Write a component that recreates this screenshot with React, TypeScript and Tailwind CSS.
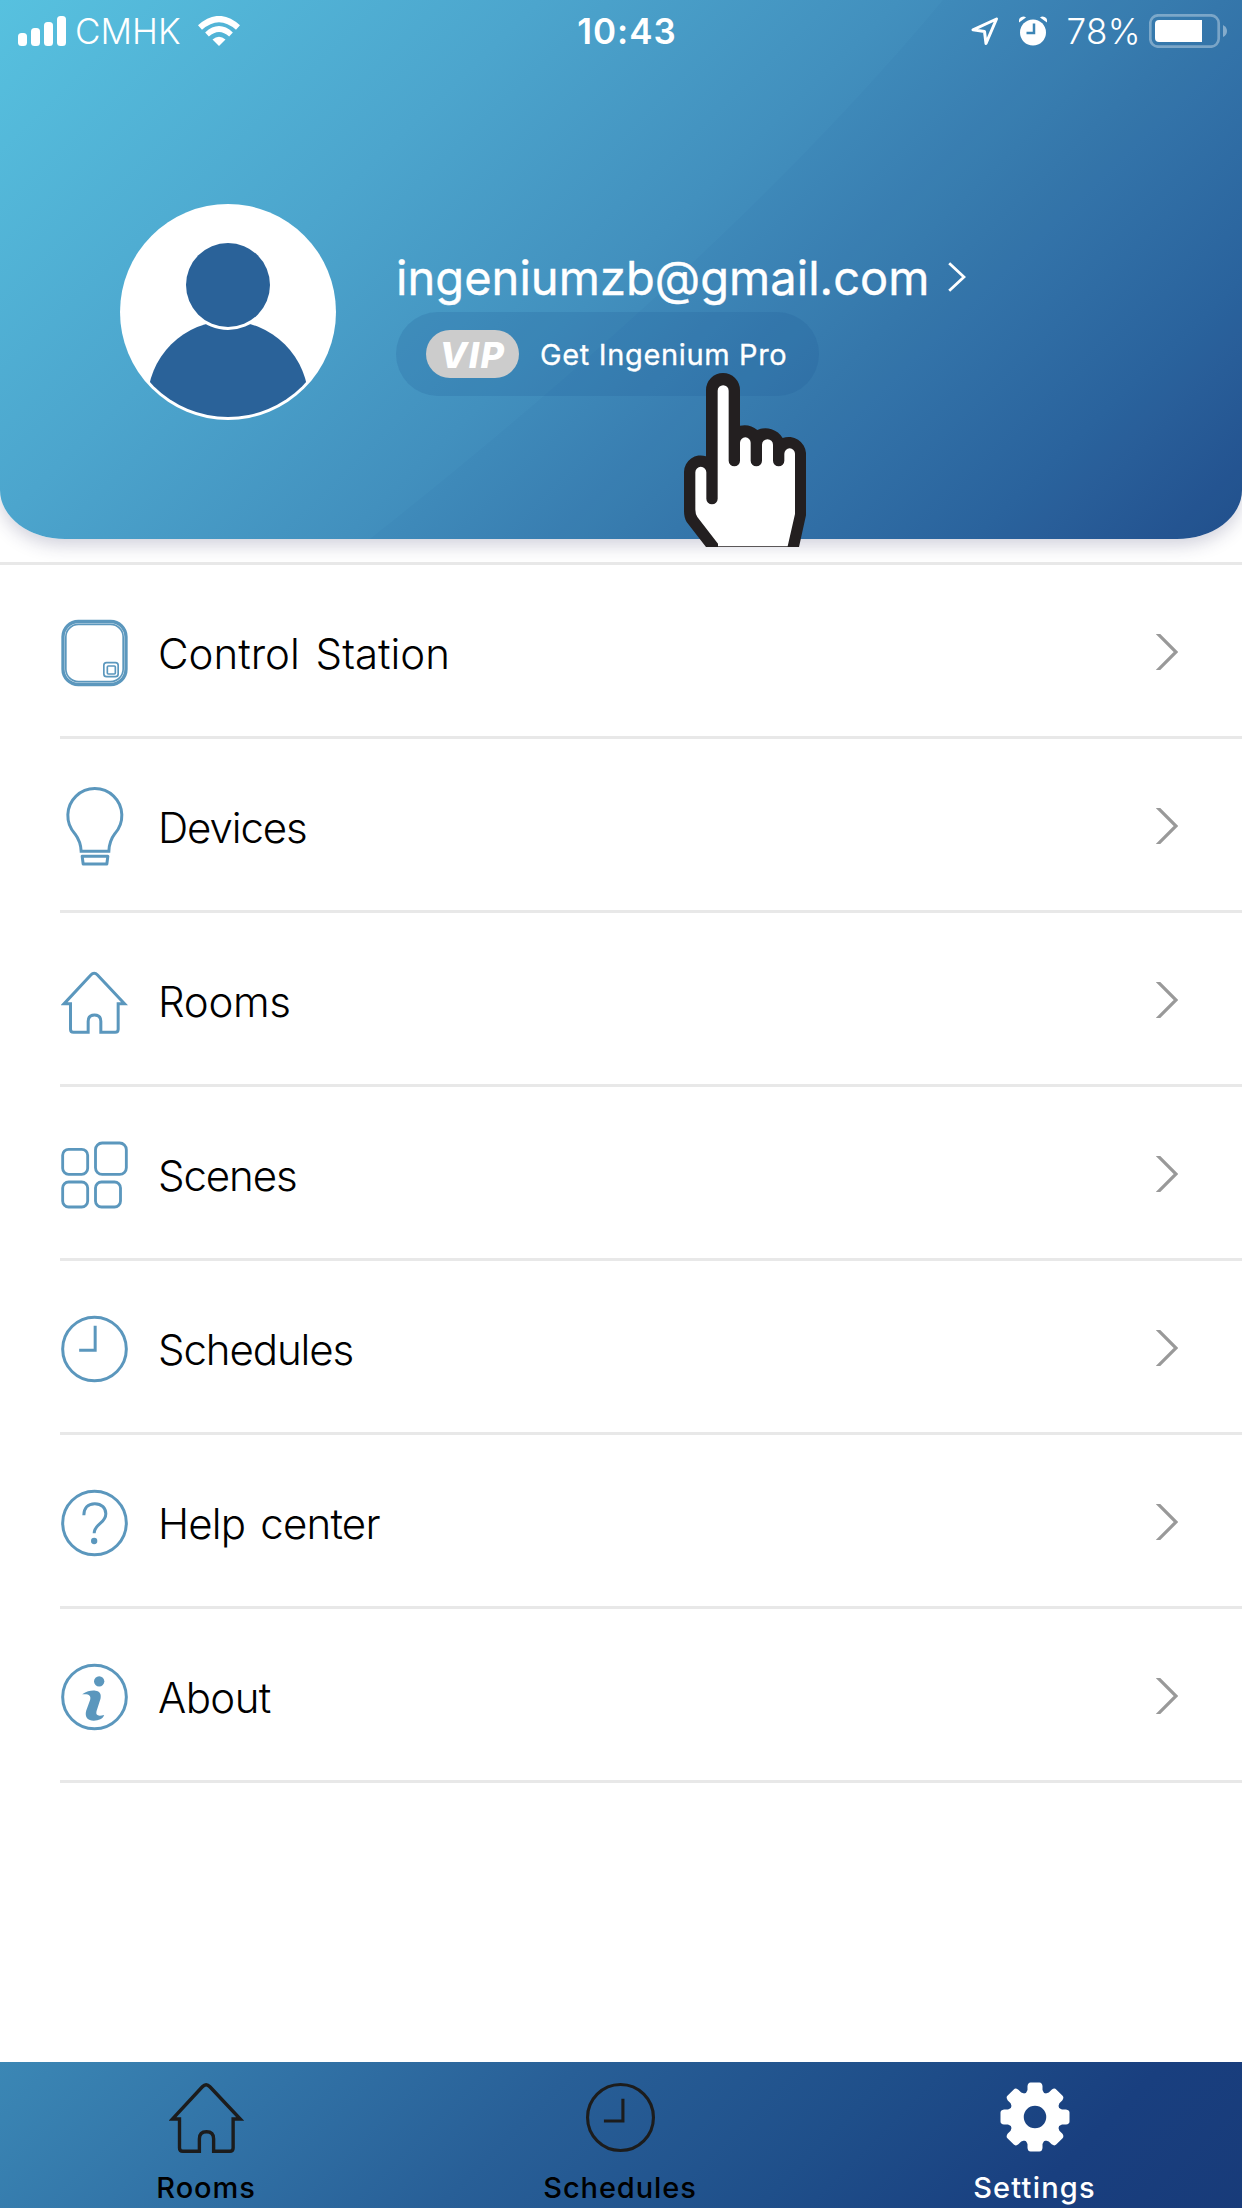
import type { ReactNode } from "react";

type IconProps = {
  className?: string;
};

type MenuItem = {
  label: string;
  icon: ReactNode;
  spacing: string;
};

function ControlStationIcon() {
  return (
    <svg viewBox="0 0 200 240" className="w-[67px] h-20" fill="none" stroke="#5b97bd">
      <rect x="5.500" y="25.500" width="189" height="189" rx="46" strokeWidth="10" />
      <rect x="14" y="34" width="172" height="172" rx="38" strokeWidth="5" />
      <rect x="128" y="149" width="43" height="42" rx="8" strokeWidth="5" />
      <rect x="138.500" y="159" width="24" height="24" rx="3" strokeWidth="5" />
    </svg>
  );
}

function BulbIcon() {
  return (
    <svg viewBox="0 0 200 240" className="w-[67px] h-20" fill="none" stroke="#5b97bd" strokeWidth="9">
      <path d="M60 193 C59 165 50 152 41 140 A81 81 0 1 1 161 140 C152 152 144 165 143 193 Z" />
      <path d="M63 208 H140 L137 231 H66 Z" strokeLinejoin="round" />
    </svg>
  );
}

function HouseIcon({ className }: IconProps) {
  return (
    <svg viewBox="0 0 200 240" className={className} fill="none" stroke="currentColor" strokeWidth="9">
      <path d="M81 214 H37 Q28 214 28 205 V128 H9 L89 42 Q99 31 109 42 L190 128 H171 V205 Q171 214 162 214 H119 V181 Q119 162 100 162 Q81 162 81 181 Z" />
    </svg>
  );
}

function ScenesIcon() {
  return (
    <svg viewBox="0 0 200 240" className="w-[67px] h-20" fill="none" stroke="#5b97bd" strokeWidth="8.500">
      <rect x="4.500" y="43" width="75" height="75" rx="18" />
      <rect x="103" y="24" width="92.500" height="94" rx="20" />
      <rect x="4.500" y="141" width="75" height="75" rx="18" />
      <rect x="103" y="141" width="75" height="75" rx="18" />
    </svg>
  );
}

function ClockIcon({ className, hands }: IconProps & { hands: string }) {
  return (
    <svg viewBox="0 0 200 240" className={className} fill="none" stroke="currentColor" strokeWidth="9">
      <circle cx="100" cy="120" r="95.500" />
      <path d={hands} />
    </svg>
  );
}

function HelpIcon() {
  return (
    <svg viewBox="0 0 200 240" className="w-[67px] h-20" fill="none" stroke="#5b97bd" strokeWidth="9">
      <circle cx="100" cy="120" r="95.500" />
      <path d="M68 97 C68 75 80 62 101 62 C122 62 134 76 134 92 C134 122 99 122 99 151" />
      <circle cx="99" cy="174" r="9.500" fill="#5b97bd" stroke="none" />
    </svg>
  );
}

function AboutIcon() {
  return (
    <svg viewBox="0 0 200 240" className="w-[67px] h-20" fill="#5b97bd">
      <circle cx="100" cy="120" r="95.500" fill="none" stroke="#5b97bd" strokeWidth="9" />
      <circle cx="114" cy="73" r="15.500" />
      <path d="M63 112 C78 101 92 100 103 101 C116 102 121 111 118 125 L106 163 C103 175 110 179 129 174 C126 185 112 191 98 191 C80 191 70 180 75 161 L87 128 C90 116 84 110 63 112 Z" />
    </svg>
  );
}

function GearIcon() {
  const angles = [0, 45, 90, 135, 180, 225, 270, 315];

  return (
    <svg viewBox="-35 -35 70 70" className="w-[70px] h-[70px]" fill="white">
      <circle r="18.500" fill="none" stroke="white" strokeWidth="14.500" />
      {angles.map((angle) => (
        <path
          key={angle}
          d="M-10 -22 L-7.500 -27 V-31 Q-7 -34.500 -4.500 -34.500 H4.500 Q7 -34.500 7.500 -31 V-27 L10 -22 Z"
          transform={`rotate(${angle})`}
        />
      ))}
    </svg>
  );
}

function Avatar() {
  return (
    <svg viewBox="60 72 648 648" className="w-[216px] h-[216px] shrink-0">
      <defs>
        <clipPath id="avatar-clip">
          <circle cx="384" cy="396" r="315" />
        </clipPath>
      </defs>
      <circle cx="384" cy="396" r="324" fill="white" />
      <circle cx="384" cy="664.500" r="241.700" fill="#2a6299" clipPath="url(#avatar-clip)" />
      <circle cx="384" cy="315" r="135" fill="white" />
      <circle cx="384" cy="315" r="126" fill="#2a6299" />
    </svg>
  );
}

function Pointer() {
  return (
    <svg viewBox="132 98 366 522" className="absolute left-[684px] top-[373px] w-[122px] h-[174px]">
      <path
        fill="#231f20"
        d="M198 620 L140 545 Q132 532 132 512 V394 A50 50 0 0 1 198 348 V149 A51 51 0 0 1 300 149 V256 A60 60 0 0 1 352 269 A60 60 0 0 1 428 293 A52 52 0 0 1 498 338 V525 L477 620 Z"
      />
      <path
        fill="white"
        d="M234 618 V610 L172 530 Q166 520 166 508 V396 A16.500 16.500 0 0 1 199 396 V475 A17 17 0 0 0 233 475 V151 A16.500 16.500 0 0 1 266 151 V361 A17 17 0 0 0 300 361 V307 A16 16 0 0 1 332 307 V361 A17 17 0 0 0 366 361 V313 A16.500 16.500 0 0 1 399 313 V361 A17 17 0 0 0 433 361 V340 A16 16 0 0 1 465 340 V521 L443 618 Z"
      />
    </svg>
  );
}

function StatusBar() {
  return (
    <div className="relative grid grid-cols-3 items-center h-[62px] text-white">
      <div className="flex items-center pl-[18px]">
        <svg viewBox="0 0 48 30" className="w-12 h-[30px]" fill="white">
          <rect x="0" y="17" width="9" height="13" rx="3.500" />
          <rect x="13" y="12" width="9" height="18" rx="3.500" />
          <rect x="26" y="6" width="9" height="24" rx="3.500" />
          <rect x="39" y="0" width="9" height="30" rx="3.500" />
        </svg>
        <span className="ml-[9px] w-[123px] text-[35px] leading-[62px] font-light">CMHK</span>
        <svg viewBox="0 0 42 30" className="w-[42px] h-[30px]" fill="none" stroke="white">
          <path d="M2 11.500 Q21 -5.500 40 11.500" strokeWidth="6" />
          <path d="M9 18.500 Q21 7.500 33 18.500" strokeWidth="5.500" />
          <path d="M14.500 23.500 Q21 18 27.500 23.500 L21 30 Z" fill="white" stroke="none" />
        </svg>
      </div>

      <div className="pl-3 text-center text-[35px] font-semibold tracking-[1px]">10:43</div>

      <div className="flex items-center justify-end pr-[15px]">
        <svg viewBox="0 0 29 30" className="w-[29px] h-[30px]" fill="none" stroke="white" strokeWidth="3">
          <path d="M26.500 3 L3 13.800 L14.500 15.500 L16 27.500 Z" strokeLinejoin="round" />
        </svg>
        <svg viewBox="0 0 28 30" className="ml-5 w-7 h-[30px]" fill="white">
          <circle cx="14" cy="16.500" r="13" />
          <path d="M0 6.500 Q-1 2.500 2.500 1 Q5 0 7 1.500 Z" />
          <path d="M28 6.500 Q29 2.500 25.500 1 Q23 0 21 1.500 Z" />
          <path d="M15 7.500 V17 H7.500" fill="none" stroke="#3c85b5" strokeWidth="2.500" />
        </svg>
        <span className="ml-[20px] text-[35px] leading-[62px] font-light tracking-[0.4px]">78%</span>
        <svg viewBox="0 0 78 34" className="ml-[8px] w-[78px] h-[34px]">
          <rect x="1.300" y="1.300" width="68.400" height="31.400" rx="8" fill="none" stroke="white" strokeOpacity="0.35" strokeWidth="2.700" />
          <path d="M53 6 H10 Q6 6 6 10 V24 Q6 28 10 28 H53 Z" fill="white" />
          <path d="M74 11 Q78 13 78 17 Q78 21 74 23 Z" fill="white" fillOpacity="0.4" />
        </svg>
      </div>
    </div>
  );
}

function Header() {
  return (
    <header className="relative h-[539px] overflow-hidden rounded-b-[65px_49px] bg-[linear-gradient(136deg,#57c1df_0%,#4ca5cd_30%,#4290be_50%,#3779ad_68%,#2c659e_85%,#22508d_100%)]">
      <svg viewBox="0 0 1242 539" className="absolute inset-0 w-full h-full">
        <path d="M943 0 Q735 250 370 539 H1242 V0 Z" fill="#0a2f78" fillOpacity="0.025" />
      </svg>
      <StatusBar />
      <div className="relative flex items-start pl-[120px] pt-[142px]">
        <Avatar />
        <div className="flex flex-col items-start ml-[60px] pt-[41px]">
          <div className="flex items-center h-[65px] mb-[2px] text-white">
            <span className="text-[47px] leading-[65px] tracking-[0.05px] [-webkit-text-stroke:0.4px_white]">ingeniumzb@gmail.com</span>
            <svg viewBox="0 0 18 30" className="ml-[18px] mb-[2px] w-[18px] h-[30px]" fill="none" stroke="white" strokeWidth="2.800">
              <path d="M1.200 1.200 L16 15 L1.200 28.800" />
            </svg>
          </div>
          <button className="flex items-center w-[423px] h-[84px] pl-[30px] rounded-[42px] bg-[#1d5a94]/20 text-white">
            <span className="flex items-center justify-center w-[93px] h-12 pt-px rounded-[24px] bg-[#cccccc] text-[36px] leading-none font-extrabold italic tracking-[1.5px]">
              VIP
            </span>
            <span className="ml-[21px] pt-px text-[29px] tracking-[0.65px] whitespace-nowrap [-webkit-text-stroke:0.3px_white]">
              Get Ingenium Pro
            </span>
          </button>
        </div>
      </div>
    </header>
  );
}

const menuItems: MenuItem[] = [
  {
    label: "Control Station",
    icon: <ControlStationIcon />,
    spacing: "[word-spacing:4px]",
  },
  {
    label: "Devices",
    icon: <BulbIcon />,
    spacing: "tracking-[-1.1px]",
  },
  {
    label: "Rooms",
    icon: <HouseIcon className="w-[67px] h-20 text-[#5b97bd]" />,
    spacing: "tracking-[-0.3px]",
  },
  {
    label: "Scenes",
    icon: <ScenesIcon />,
    spacing: "tracking-[-1.1px]",
  },
  {
    label: "Schedules",
    icon: <ClockIcon className="w-[67px] h-20 text-[#5b97bd]" hands="M102 50 V124 H54" />,
    spacing: "tracking-[-1.1px]",
  },
  {
    label: "Help center",
    icon: <HelpIcon />,
    spacing: "tracking-[-0.8px] [word-spacing:4px]",
  },
  {
    label: "About",
    icon: <AboutIcon />,
    spacing: "tracking-[-0.6px]",
  },
];

function MenuRow({ label, icon, spacing }: MenuItem) {
  return (
    <li className="flex items-center ml-[60px] h-[174px] pl-px pt-1 border-b-[3px] border-[#e8e8e8]">
      {icon}
      <span className={`ml-[30px] pt-px text-[42px] font-light text-black ${spacing}`}>{label}</span>
      <svg viewBox="0 0 22 36" className="ml-auto mr-16 mb-[2px] w-[22px] h-9" fill="none" stroke="#999999" strokeWidth="3.200">
        <path d="M0.500 -1.500 L20 18 L0.500 37.500" />
      </svg>
    </li>
  );
}

function TabBar() {
  return (
    <nav className="grid grid-cols-3 h-[146px] bg-[linear-gradient(135deg,#3b87b5_0%,#3172a6_22%,#285f97_42%,#1f4f8a_65%,#193f7f_84%,#183b79_100%)] text-[29px] leading-9 font-medium tracking-[0.9px]">
      <div className="flex flex-col items-center pt-[9px] pr-[2px]">
        <HouseIcon className="w-[75px] h-[90px] text-[#1c1c1c]" />
        <span className="mt-[9px] text-black">Rooms</span>
      </div>
      <div className="flex flex-col items-center pt-[14px] pr-[2px]">
        <ClockIcon className="w-[69px] h-[83px] text-[#1c1c1c]" hands="M107 66 V130 H52" />
        <span className="mt-[11px] text-black">Schedules</span>
      </div>
      <div className="flex flex-col items-center pt-[20px] pr-px text-white">
        <GearIcon />
        <span className="mt-[18px] tracking-[1.2px]">Settings</span>
      </div>
    </nav>
  );
}

export default function App() {
  return (
    <div className="relative flex flex-col w-[1242px] h-[2208px] overflow-hidden bg-white font-['Inter','Liberation_Sans',sans-serif]">
      <div className="rounded-b-[65px_49px] shadow-[0_6px_18px_rgba(40,40,90,0.22)]">
        <Header />
      </div>
      <ul className="mt-[23px] border-t-[3px] border-[#e8e8e8]">
        {menuItems.map((item) => (
          <MenuRow key={item.label} label={item.label} icon={item.icon} spacing={item.spacing} />
        ))}
      </ul>
      <div className="grow" />
      <TabBar />
      <Pointer />
    </div>
  );
}
